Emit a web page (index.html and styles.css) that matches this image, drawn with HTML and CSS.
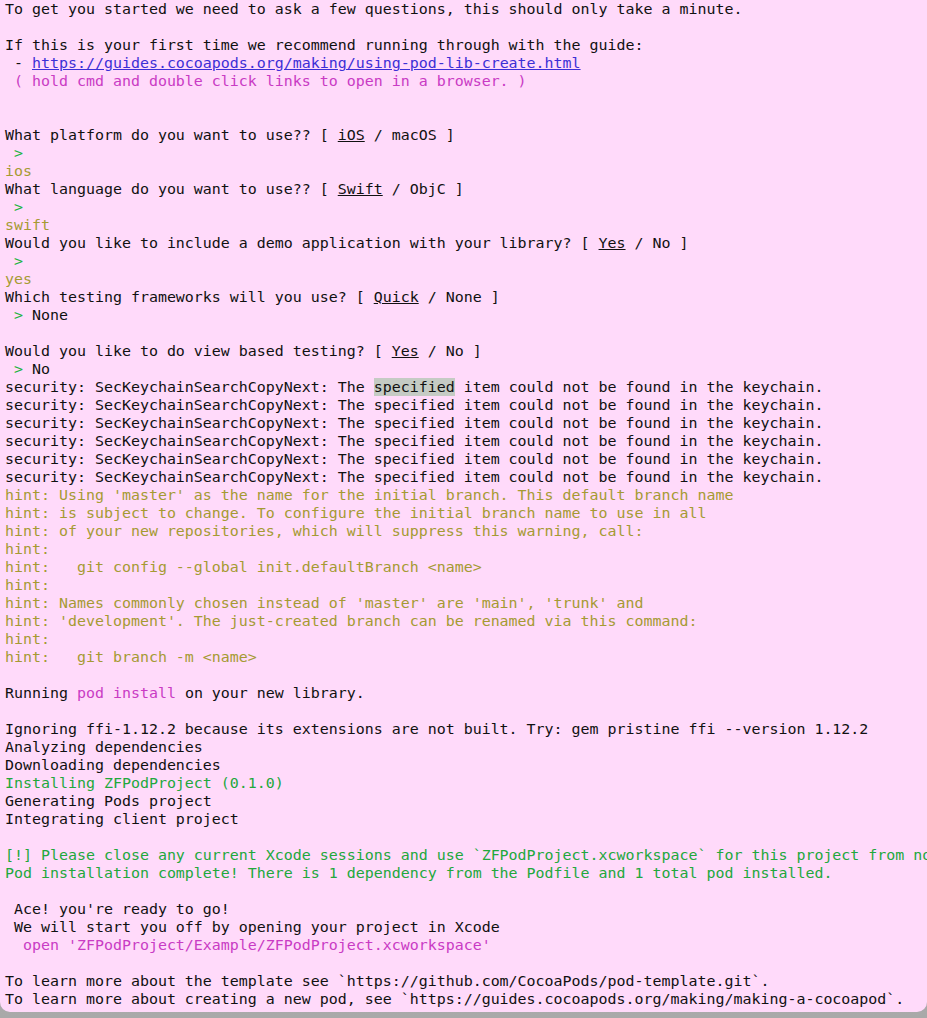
FILE: index.html
```html
<!DOCTYPE html>
<html lang="en">
<head>
<meta charset="utf-8">
<title>Terminal</title>
<link rel="stylesheet" href="styles.css">
</head>
<body>
<div class="window">
<pre class="term">To get you started we need to ask a few questions, this should only take a minute.

If this is your first time we recommend running through with the guide:
 - <span class="link">https://guides.cocoapods.org/making/using-pod-lib-create.html</span>
<span class="mag"> ( hold cmd and double click links to open in a browser. )</span>


What platform do you want to use?? [ <span class="u">iOS</span> / macOS ]
 <span class="grn">&gt;</span>
<span class="olv">ios</span>
What language do you want to use?? [ <span class="u">Swift</span> / ObjC ]
 <span class="grn">&gt;</span>
<span class="olv">swift</span>
Would you like to include a demo application with your library? [ <span class="u">Yes</span> / No ]
 <span class="grn">&gt;</span>
<span class="olv">yes</span>
Which testing frameworks will you use? [ <span class="u">Quick</span> / None ]
 <span class="grn">&gt;</span> None

Would you like to do view based testing? [ <span class="u">Yes</span> / No ]
 <span class="grn">&gt;</span> No
security: SecKeychainSearchCopyNext: The <span class="sel">specified</span> item could not be found in the keychain.
security: SecKeychainSearchCopyNext: The specified item could not be found in the keychain.
security: SecKeychainSearchCopyNext: The specified item could not be found in the keychain.
security: SecKeychainSearchCopyNext: The specified item could not be found in the keychain.
security: SecKeychainSearchCopyNext: The specified item could not be found in the keychain.
security: SecKeychainSearchCopyNext: The specified item could not be found in the keychain.
<span class="olv">hint: Using 'master' as the name for the initial branch. This default branch name
hint: is subject to change. To configure the initial branch name to use in all
hint: of your new repositories, which will suppress this warning, call:
hint:
hint:   git config --global init.defaultBranch &lt;name&gt;
hint:
hint: Names commonly chosen instead of 'master' are 'main', 'trunk' and
hint: 'development'. The just-created branch can be renamed via this command:
hint:
hint:   git branch -m &lt;name&gt;</span>

Running <span class="mag">pod install</span> on your new library.

Ignoring ffi-1.12.2 because its extensions are not built. Try: gem pristine ffi --version 1.12.2
Analyzing dependencies
Downloading dependencies
<span class="grn2">Installing ZFPodProject (0.1.0)</span>
Generating Pods project
Integrating client project

<span class="grn2">[!] Please close any current Xcode sessions and use `ZFPodProject.xcworkspace` for this project from now on.
Pod installation complete! There is 1 dependency from the Podfile and 1 total pod installed.</span>

 Ace! you're ready to go!
 We will start you off by opening your project in Xcode
<span class="mag">  open 'ZFPodProject/Example/ZFPodProject.xcworkspace'</span>

To learn more about the template see `https://github.com/CocoaPods/pod-template.git`.
To learn more about creating a new pod, see `https://guides.cocoapods.org/making/making-a-cocoapod`.</pre>
</div>
</body>
</html>
```

FILE: styles.css
```css
html, body {
  margin: 0;
  padding: 0;
}
body {
  background: linear-gradient(#c4c4c4, #a9a9a9);
  height: 1018px;
  overflow: hidden;
}
.window {
  background: #ffdafa;
  height: 1012px;
  border-radius: 0 0 10px 10px;
  overflow: hidden;
}
.term {
  margin: 0;
  padding: 0 0 0 5px;
  font-family: "DejaVu Sans Mono", "Liberation Mono", monospace;
  font-size: 14.95px;
  line-height: 18px;
  color: #111;
  white-space: pre;
}
.link {
  color: #3c2fd6;
  text-decoration: underline;
}
.mag {
  color: #c93bc4;
}
.grn {
  color: #21b43f;
}
.grn2 {
  color: #22a83c;
}
.olv {
  color: #a59a33;
}
.u {
  text-decoration: underline;
}
.sel {
  background: #c5cbc4;
}
```
